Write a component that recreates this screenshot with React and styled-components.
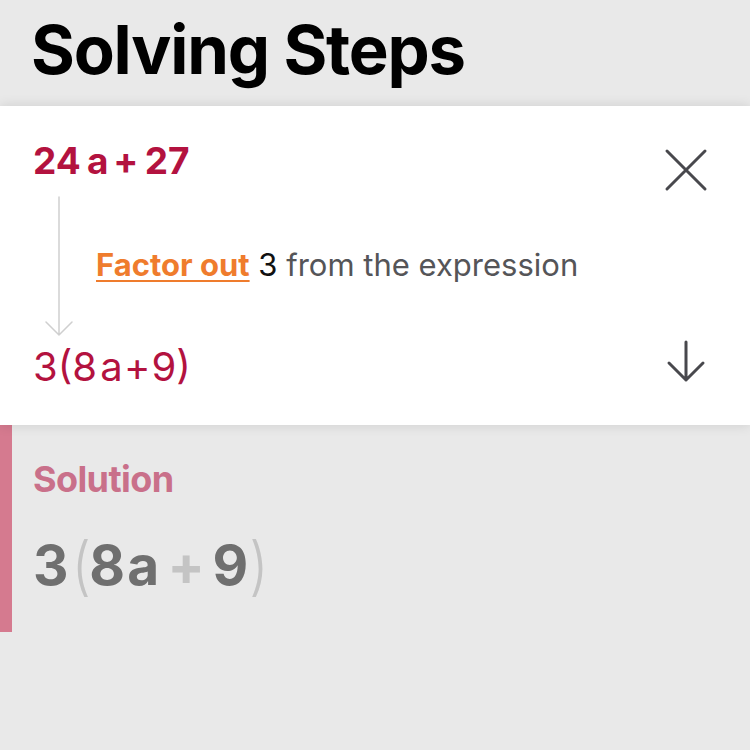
import React from 'react';
import styled, { createGlobalStyle } from 'styled-components';

const GlobalStyle = createGlobalStyle`
  html, body {
    margin: 0;
    padding: 0;
    background: #e9e9e9;
  }
  body {
    font-family: Inter, "Noto Sans", "Liberation Sans", sans-serif;
    -webkit-font-smoothing: antialiased;
  }
`;

const CloseIcon = () => (
  <svg width="48" height="48" viewBox="0 0 48 48" fill="none">
    <path d="M5 5 L43 43 M43 5 L5 43" stroke="#48484d" strokeWidth="3" strokeLinecap="round" />
  </svg>
);

const ArrowDownIcon = () => (
  <svg width="48" height="48" viewBox="0 0 48 48" fill="none">
    <path d="M24 5 V43 M7 26 L24 43 L41 26" stroke="#48484d" strokeWidth="3" strokeLinecap="round" strokeLinejoin="round" />
  </svg>
);

const Connector = () => (
  <ConnectorSvg width="63" height="160" viewBox="0 0 63 160" fill="none">
    <path d="M26 14 V152 M13 139 L26 152 L39 139" stroke="#cfcfcf" strokeWidth="1.5" strokeLinecap="round" />
  </ConnectorSvg>
);

export default function App() {
  return (
    <Page>
      <GlobalStyle />
      <Header>
        <Title>Solving Steps</Title>
      </Header>

      <Card>
        <StepRow $h={44}>
          <Expr $bold>
            24<Sym $ml={0.17} $mr={0.08}>a</Sym><Sym $ml={0.05} $mr={0.17}>+</Sym>27
          </Expr>
          <IconButton aria-label="Close" $offset={7}>
            <CloseIcon />
          </IconButton>
        </StepRow>

        <Transition>
          <Connector />
          <Explanation>
            <Action>Factor out</Action> <Value>3</Value> from the expression
          </Explanation>
        </Transition>

        <StepRow $h={48}>
          <Expr>
            3(8<Sym $ml={0.08}>a</Sym><Sym $ml={0.03} $mr={0.03}>+</Sym>9)
          </Expr>
          <IconButton aria-label="Next step" $offset={-6}>
            <ArrowDownIcon />
          </IconButton>
        </StepRow>
      </Card>

      <Solution>
        <SolutionLabel>Solution</SolutionLabel>
        <SolutionExpr>
          3<Faint $tall $ml={0.06} $mr={-0.03}>(</Faint>8<Sym $ml={0.04}>a</Sym><Faint $bold $ml={0.15} $mr={0.14}>+</Faint>9<Faint $tall $ml={0.02}>)</Faint>
        </SolutionExpr>
      </Solution>
    </Page>
  );
}

const Page = styled.div`
  min-height: 100vh;
  background: #e9e9e9;
  display: flex;
  flex-direction: column;
`;

const Header = styled.header`
  padding: 10px 0 16px 31px;
`;

const Title = styled.h1`
  margin: 0;
  font-size: 67px;
  line-height: 80px;
  font-weight: 700;
  letter-spacing: -1.2px;
  color: #000;
`;

const Card = styled.section`
  background: #fff;
  padding: 33px 40px 34px 33px;
  box-shadow: 0 0 12px rgba(0, 0, 0, 0.12);
  position: relative;
  z-index: 1;
  display: flex;
  flex-direction: column;
`;

const StepRow = styled.div`
  display: flex;
  justify-content: space-between;
  align-items: flex-start;
  height: ${p => p.$h}px;
`;

const Expr = styled.div`
  color: #b3123f;
  font-size: ${p => (p.$bold ? 37 : 40)}px;
  line-height: ${p => (p.$bold ? 44 : 48)}px;
  font-weight: ${p => (p.$bold ? 700 : 400)};
  white-space: nowrap;
`;

const Sym = styled.span`
  display: inline-block;
  margin-left: ${p => p.$ml || 0}em;
  margin-right: ${p => p.$mr || 0}em;
`;

const IconButton = styled.button`
  border: 0;
  padding: 0;
  background: none;
  display: flex;
  margin-top: ${p => p.$offset}px;
  cursor: pointer;
`;

const Transition = styled.div`
  display: flex;
  align-items: center;
  height: 160px;
`;

const ConnectorSvg = styled.svg`
  flex: none;
  display: block;
`;

const Explanation = styled.p`
  margin: 0;
  padding-top: 3px;
  font-size: 31px;
  line-height: 40px;
  color: #555558;
  white-space: nowrap;
`;

const Action = styled.span`
  color: #ef7c2d;
  font-weight: 700;
  text-decoration: underline;
  text-decoration-thickness: 2px;
  text-underline-offset: 4px;
`;

const Value = styled.span`
  color: #111;
`;

const Solution = styled.section`
  border-left: 12px solid #d57a8f;
  padding: 32px 0 35px 21px;
  display: flex;
  flex-direction: column;
`;

const SolutionLabel = styled.h2`
  margin: 0;
  font-size: 36px;
  line-height: 44px;
  font-weight: 700;
  letter-spacing: -0.6px;
  color: #c9708a;
`;

const SolutionExpr = styled.div`
  margin-top: 32px;
  font-size: 55px;
  line-height: 64px;
  font-weight: 700;
  color: #6f6f6f;
  white-space: nowrap;
`;

const Faint = styled.span`
  display: inline-block;
  color: #c4c4c4;
  font-weight: ${p => (p.$bold ? 700 : 300)};
  margin-left: ${p => p.$ml || 0}em;
  margin-right: ${p => p.$mr || 0}em;
  transform: ${p => (p.$tall ? 'scaleY(1.16)' : 'none')};
`;
